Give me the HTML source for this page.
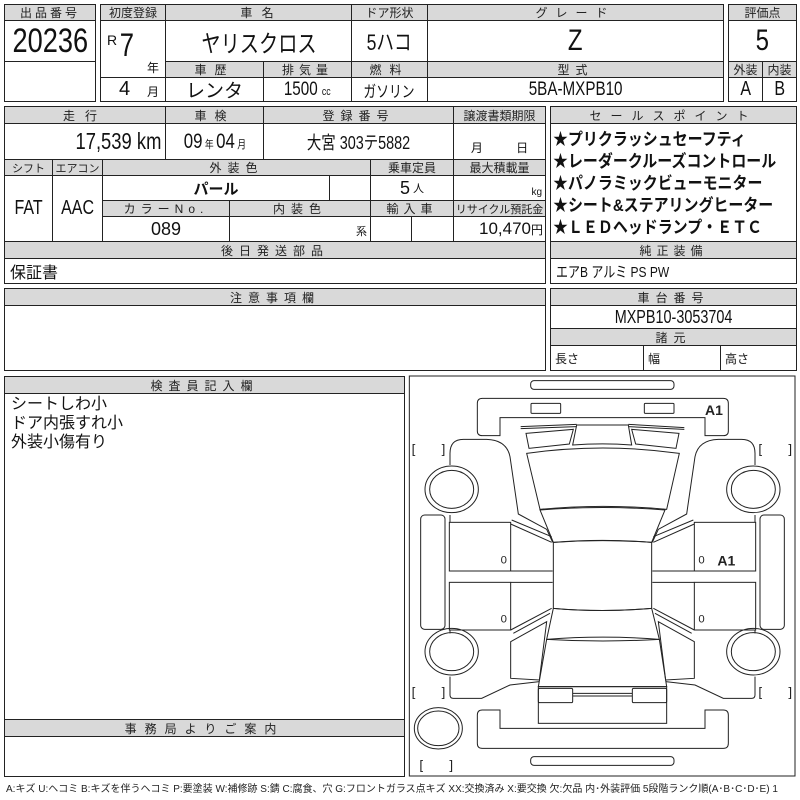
<!DOCTYPE html>
<html><head><meta charset="utf-8">
<style>
*{margin:0;padding:0;box-sizing:border-box}
body{width:800px;height:800px;background:#fff;position:relative;overflow:hidden;font-family:"Liberation Sans","Noto Sans CJK JP",sans-serif;color:#111}
.c{position:absolute;border:1px solid #222;display:flex;align-items:center;justify-content:center;white-space:nowrap;overflow:hidden}
.h{background:#d9d9d9;font-size:12px;letter-spacing:3px;color:#222}
.n{display:inline-block;transform:scaleX(.8)}
</style></head><body>
<!-- box1 -->
<div class="c h" style="left:4px;top:4px;width:92px;height:17px">出品番号</div>
<div class="c" style="left:4px;top:20px;width:92px;height:42px;font-size:34px"><span class="n">20236</span></div>
<div class="c" style="left:4px;top:61px;width:92px;height:41px"></div>
<!-- box2 -->
<div class="c h" style="left:100px;top:4px;width:66px;height:17px;letter-spacing:0">初度登録</div>
<div class="c h" style="left:165px;top:4px;width:187px;height:17px">車 名</div>
<div class="c h" style="left:351px;top:4px;width:77px;height:17px;letter-spacing:0">ドア形状</div>
<div class="c h" style="left:427px;top:4px;width:297px;height:17px;letter-spacing:8px">グレード</div>
<div class="c" style="left:100px;top:20px;width:66px;height:58px;display:block">
<span style="position:absolute;left:6px;top:11px;font-size:14px">R</span>
<span style="position:absolute;left:17px;top:6px;font-size:32px" class="n">7</span>
<span style="position:absolute;left:46px;top:38px;font-size:12px">年</span></div>
<div class="c" style="left:100px;top:77px;width:66px;height:25px;display:block">
<span style="position:absolute;left:18px;top:0px;font-size:20px">4</span>
<span style="position:absolute;left:46px;top:5px;font-size:12px">月</span></div>
<div class="c" style="left:165px;top:20px;width:187px;height:42px;font-size:24px"><span class="n">ヤリスクロス</span></div>
<div class="c" style="left:351px;top:20px;width:77px;height:42px;font-size:22px"><span class="n">5ハコ</span></div>
<div class="c" style="left:427px;top:20px;width:297px;height:42px;font-size:30px"><span class="n">Z</span></div>
<div class="c h" style="left:165px;top:61px;width:99px;height:17px;letter-spacing:8px">車歴</div>
<div class="c h" style="left:263px;top:61px;width:89px;height:17px;letter-spacing:5px">排気量</div>
<div class="c h" style="left:351px;top:61px;width:77px;height:17px;letter-spacing:8px">燃料</div>
<div class="c h" style="left:427px;top:61px;width:297px;height:17px;letter-spacing:6px">型式</div>
<div class="c" style="left:165px;top:77px;width:99px;height:25px;font-size:19px">レンタ</div>
<div class="c" style="left:263px;top:77px;width:89px;height:25px;font-size:19px"><span class="n">1500 <small style="font-size:11px">cc</small></span></div>
<div class="c" style="left:351px;top:77px;width:77px;height:25px;font-size:16px"><span class="n">ガソリン</span></div>
<div class="c" style="left:427px;top:77px;width:297px;height:25px;font-size:19px"><span class="n">5BA-MXPB10</span></div>
<!-- box3 -->
<div class="c h" style="left:728px;top:4px;width:69px;height:17px;letter-spacing:0">評価点</div>
<div class="c" style="left:728px;top:20px;width:69px;height:42px;font-size:30px"><span class="n">5</span></div>
<div class="c h" style="left:728px;top:61px;width:35px;height:17px;letter-spacing:0">外装</div>
<div class="c h" style="left:762px;top:61px;width:35px;height:17px;letter-spacing:0">内装</div>
<div class="c" style="left:728px;top:77px;width:35px;height:25px;font-size:20px"><span class="n">A</span></div>
<div class="c" style="left:762px;top:77px;width:35px;height:25px;font-size:20px"><span class="n">B</span></div>
<!-- box4 -->
<div class="c h" style="left:4px;top:106px;width:162px;height:18px;letter-spacing:10px">走行</div>
<div class="c h" style="left:165px;top:106px;width:99px;height:18px;letter-spacing:8px">車検</div>
<div class="c h" style="left:263px;top:106px;width:191px;height:18px;letter-spacing:6px">登録番号</div>
<div class="c h" style="left:453px;top:106px;width:93px;height:18px;letter-spacing:0">譲渡書類期限</div>
<div class="c" style="left:4px;top:123px;width:162px;height:37px;font-size:23px;justify-content:flex-end;padding-right:4px"><span class="n" style="transform-origin:right">17,539 km</span></div>
<div class="c" style="left:165px;top:123px;width:99px;height:37px;font-size:21px"><span class="n">09<small style="font-size:11px"> 年 </small>04<small style="font-size:11px"> 月</small></span></div>
<div class="c" style="left:263px;top:123px;width:191px;height:37px;font-size:18px"><span class="n">大宮 303テ5882</span></div>
<div class="c" style="left:453px;top:123px;width:93px;height:37px;font-size:12px;align-items:flex-end;padding-bottom:3px;word-spacing:30px">月 日</div>
<div class="c h" style="left:4px;top:159px;width:49px;height:17px;letter-spacing:0;font-size:11px">シフト</div>
<div class="c h" style="left:52px;top:159px;width:51px;height:17px;letter-spacing:0;font-size:11px">エアコン</div>
<div class="c h" style="left:102px;top:159px;width:269px;height:17px;letter-spacing:6px">外装色</div>
<div class="c h" style="left:370px;top:159px;width:84px;height:17px;letter-spacing:0">乗車定員</div>
<div class="c h" style="left:453px;top:159px;width:93px;height:17px;letter-spacing:0">最大積載量</div>
<div class="c" style="left:4px;top:175px;width:49px;height:67px;font-size:20px"><span class="n">FAT</span></div>
<div class="c" style="left:52px;top:175px;width:51px;height:67px;font-size:20px"><span class="n">AAC</span></div>
<div class="c" style="left:102px;top:175px;width:228px;height:26px;font-size:15px;font-weight:bold">パール</div>
<div class="c" style="left:329px;top:175px;width:42px;height:26px"></div>
<div class="c" style="left:370px;top:175px;width:84px;height:26px;font-size:18px">5 <small style="font-size:11px">&nbsp;人</small></div>
<div class="c" style="left:453px;top:175px;width:93px;height:26px;font-size:10px;justify-content:flex-end;align-items:flex-end;padding:0 3px 2px 0">kg</div>
<div class="c h" style="left:102px;top:200px;width:128px;height:17px;letter-spacing:5px">カラーNo.</div>
<div class="c h" style="left:229px;top:200px;width:142px;height:17px;letter-spacing:6px">内装色</div>
<div class="c h" style="left:370px;top:200px;width:84px;height:17px;letter-spacing:5px">輸入車</div>
<div class="c h" style="left:453px;top:200px;width:93px;height:17px;letter-spacing:0;font-size:11px">リサイクル預託金</div>
<div class="c" style="left:102px;top:216px;width:128px;height:26px;font-size:18px">089</div>
<div class="c" style="left:229px;top:216px;width:142px;height:26px;font-size:11px;justify-content:flex-end;align-items:flex-end;padding:0 3px 2px 0">系</div>
<div class="c" style="left:370px;top:216px;width:42px;height:26px"></div>
<div class="c" style="left:411px;top:216px;width:43px;height:26px"></div>
<div class="c" style="left:453px;top:216px;width:93px;height:26px;font-size:17px;justify-content:flex-end;padding-right:2px">10,470<small style="font-size:12px">円</small></div>
<div class="c h" style="left:4px;top:241px;width:542px;height:18px;letter-spacing:6px">後日発送部品</div>
<div class="c" style="left:4px;top:258px;width:542px;height:26px;font-size:16px;justify-content:flex-start;padding-left:5px">保証書</div>
<!-- sales -->
<div class="c h" style="left:550px;top:106px;width:247px;height:18px;letter-spacing:9px">セールスポイント</div>
<div class="c" style="left:550px;top:123px;width:247px;height:119px;display:block;padding:5px 0 0 2px">
<div style="font-size:17px;font-weight:bold;line-height:22px;transform:scaleX(.88);transform-origin:left top;white-space:nowrap">★プリクラッシュセーフティ<br>★レーダークルーズコントロール<br>★パノラミックビューモニター<br>★シート&amp;ステアリングヒーター<br>★ＬＥＤヘッドランプ・ＥＴＣ</div></div>
<div class="c h" style="left:550px;top:241px;width:247px;height:18px;letter-spacing:5px">純正装備</div>
<div class="c" style="left:550px;top:258px;width:247px;height:26px;font-size:15px;justify-content:flex-start;padding-left:5px"><span class="n" style="transform-origin:left">エアB アルミ PS PW</span></div>
<!-- notes -->
<div class="c h" style="left:4px;top:288px;width:542px;height:18px;letter-spacing:6px">注意事項欄</div>
<div class="c" style="left:4px;top:305px;width:542px;height:66px"></div>
<div class="c h" style="left:550px;top:288px;width:247px;height:18px;letter-spacing:6px">車台番号</div>
<div class="c" style="left:550px;top:305px;width:247px;height:24px;font-size:18px"><span class="n">MXPB10-3053704</span></div>
<div class="c h" style="left:550px;top:328px;width:247px;height:18px;letter-spacing:6px">諸元</div>
<div class="c" style="left:550px;top:345px;width:94px;height:26px;font-size:12px;justify-content:flex-start;padding-left:4px">長さ</div>
<div class="c" style="left:643px;top:345px;width:78px;height:26px;font-size:12px;justify-content:flex-start;padding-left:4px">幅</div>
<div class="c" style="left:720px;top:345px;width:77px;height:26px;font-size:12px;justify-content:flex-start;padding-left:4px">高さ</div>
<!-- inspector -->
<div class="c h" style="left:4px;top:376px;width:401px;height:18px;letter-spacing:6px">検査員記入欄</div>
<div class="c" style="left:4px;top:393px;width:401px;height:327px;display:block;font-size:16px;line-height:19px;padding:1px 0 0 6px">シートしわ小<br>ドア内張すれ小<br>外装小傷有り</div>
<div class="c h" style="left:4px;top:719px;width:401px;height:18px;letter-spacing:8px">事務局よりご案内</div>
<div class="c" style="left:4px;top:736px;width:401px;height:41px"></div>
<div style="position:absolute;left:6px;top:780px;font-size:10px;white-space:nowrap;letter-spacing:0;color:#222">A:キズ U:ヘコミ B:キズを伴うヘコミ P:要塗装 W:補修跡 S:錆 C:腐食、穴 G:フロントガラス点キズ XX:交換済み X:要交換 欠:欠品 内･外装評価 5段階ランク順(A･B･C･D･E) 1</div>
<!-- diagram -->
<svg style="position:absolute;left:400px;top:370px" width="400" height="420" viewBox="0 0 1200 1260" fill="none" stroke="#222" stroke-width="3">
<rect x="28" y="18" width="1157" height="1200"/>
<rect x="392" y="32" width="430" height="26" rx="10"/>
<rect x="392" y="1160" width="430" height="26" rx="10"/>
<path d="M247,85 L970,85 Q985,85 985,100 L985,183 Q985,197 970,197 L915,197 L915,143 L300,143 L300,197 L247,197 Q232,197 232,183 L232,100 Q232,85 247,85Z"/>
<rect x="393" y="100" width="89" height="30" rx="3"/>
<rect x="733" y="100" width="89" height="30" rx="3"/>
<path d="M247,1020 L300,1020 L300,1075 L915,1075 L915,1020 L970,1020 Q985,1020 985,1035 L985,1120 Q985,1135 970,1135 L247,1135 Q232,1135 232,1120 L232,1035 Q232,1020 247,1020Z"/>
<path d="M362,170 L530,163 M685,163 L853,173 M362,176 L530,170 M685,170 L853,178"/>
<path d="M378,190 L520,178 L508,222 L387,235Z M837,190 L695,178 L707,222 L828,235Z"/>
<path d="M530,165 L685,165 L695,225 Q608,218 518,225Z"/>
<path d="M380,250 Q608,218 838,250 L800,418 Q608,400 420,418Z"/>
<path d="M420,420 Q608,405 795,420 L755,517 Q608,507 460,517Z"/>
<path d="M460,517 Q608,505 755,517 L755,715 Q608,728 460,715Z"/>
<path d="M460,715 Q608,728 755,715 L778,808 Q608,795 440,808Z"/>
<path d="M440,808 Q608,818 778,808 L800,950 L415,950Z"/>
<rect x="415" y="950" width="385" height="110"/>
<rect x="415" y="955" width="103" height="43" rx="4"/>
<rect x="697" y="955" width="103" height="43" rx="4"/>
<path d="M518,970 L697,970 M518,978 L697,978"/>
<g id="side">
<path d="M150,285 L150,250 Q150,208 190,208 L260,208 Q320,210 330,260 L355,432 L440,478 L458,517"/>
<path d="M150,435 L150,457 M150,780 L150,790"/>
<rect x="62" y="435" width="73" height="343" rx="12"/>
<rect x="148" y="457" width="184" height="146"/>
<rect x="148" y="637" width="184" height="143"/>
<path d="M332,603 L458,603 M332,637 L458,637"/>
<path d="M332,462 L455,517 M332,780 L455,715 M335,450 L455,500 M340,790 L450,730"/>
<path d="M332,815 L440,755 L418,930 L332,925Z"/>
<path d="M150,920 L150,975 Q150,985 160,985 L245,985 L330,945 L418,935"/>
<ellipse cx="155" cy="358" rx="80" ry="70"/>
<ellipse cx="155" cy="358" rx="66" ry="57"/>
<ellipse cx="155" cy="845" rx="80" ry="70"/>
<ellipse cx="155" cy="845" rx="66" ry="57"/>
</g>
<use href="#side" transform="translate(1215,0) scale(-1,1)"/>
<ellipse cx="115" cy="1075" rx="72" ry="62"/>
<ellipse cx="115" cy="1075" rx="62" ry="52"/>
<g fill="#222" stroke="none" font-family="Liberation Sans, sans-serif" font-size="40">
<text x="35" y="250">[</text><text x="125" y="250">]</text>
<text x="1075" y="250">[</text><text x="1165" y="250">]</text>
<text x="35" y="980">[</text><text x="125" y="980">]</text>
<text x="1075" y="980">[</text><text x="1165" y="980">]</text>
<text x="58" y="1198">[</text><text x="148" y="1198">]</text>
<text x="302" y="580" font-size="34">0</text><text x="302" y="758" font-size="34">0</text>
<text x="895" y="580" font-size="34">0</text><text x="895" y="758" font-size="34">0</text>
<text x="915" y="135" font-size="42" font-weight="bold">A1</text>
<text x="952" y="586" font-size="42" font-weight="bold">A1</text>
</g>
</svg>
</body></html>
